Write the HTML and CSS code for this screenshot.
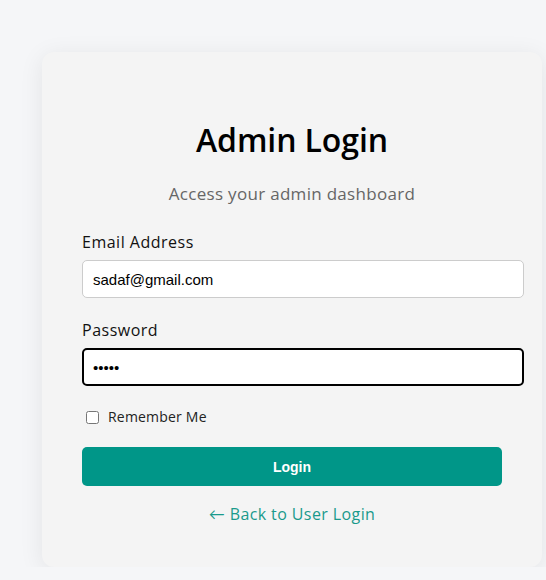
FILE: index.html
```html
<!DOCTYPE html>
<html lang="en">
<head>
<meta charset="utf-8">
<title>Admin Login</title>
<link rel="stylesheet" href="styles.css">
</head>
<body>
<div class="card">
  <h2 class="title">Admin Login</h2>
  <p class="subtitle">Access your admin dashboard</p>
  <form class="form">
    <label class="label" for="email">Email Address</label>
    <input class="input" id="email" type="email" value="sadaf@gmail.com">
    <label class="label label-pw" for="pw">Password</label>
    <input class="input input-focus" id="pw" type="password" value="admin">
    <label class="remember"><input class="check" type="checkbox"><span>Remember Me</span></label>
    <button class="btn" type="button">Login</button>
  </form>
  <a class="back" href="#">← Back to User Login</a>
</div>
</body>
</html>
```
FILE: styles.css
```css
html, body {
  margin: 0;
  padding: 0;
}
body {
  background: #f5f6f8;
  font-family: "Open Sans", "Lato", sans-serif;
  color: #111;
}
.card {
  box-sizing: border-box;
  width: 500px;
  margin: 52px 0 0 42px;
  padding: 0 40px 41px;
  background: #f4f4f4;
  border-radius: 12px;
  box-shadow: 0 4px 24px rgba(0, 0, 0, 0.08);
  display: flex;
  flex-direction: column;
  overflow: hidden;
}
.title {
  margin: 68px 0 0;
  font-size: 32px;
  line-height: 40px;
  font-weight: 600;
  text-align: center;
  color: #000;
  letter-spacing: -0.1px;
}
.subtitle {
  margin: 22px 0 0;
  font-size: 17px;
  line-height: 24px;
  color: #666;
  text-align: center;
  letter-spacing: 0.3px;
}
.form {
  display: flex;
  flex-direction: column;
  margin: 0;
}
.label {
  display: block;
  margin-top: 24px;
  font-size: 16px;
  line-height: 24px;
  color: #111;
  letter-spacing: 0.5px;
}
.label-pw {
  margin-top: 20px;
}
.input {
  width: 100%;
  margin-top: 6px;
  padding: 0 10px;
  border: 1px solid #ccc;
  border-radius: 5px;
  background: #fff;
  font-family: "Liberation Sans", Arial, sans-serif;
  font-size: 15px;
  color: #000;
  outline: none;
  box-sizing: content-box;
  height: 36px;
}
.input-focus {
  border: 2px solid #000;
  padding: 0 9px;
  height: 34px;
}
.remember {
  display: flex;
  align-items: center;
  margin-top: 21px;
  font-size: 14px;
  line-height: 20px;
  color: #222;
  letter-spacing: 0.2px;
}
.check {
  width: 13px;
  height: 13px;
  margin: 0 9px 0 4px;
}
.btn {
  margin-top: 20px;
  height: 39px;
  border: none;
  border-radius: 5px;
  background: #009688;
  color: #fff;
  font-family: "Liberation Sans", Arial, sans-serif;
  font-weight: bold;
  font-size: 14px;
}
.back {
  margin-top: 16px;
  font-size: 16px;
  line-height: 24px;
  color: #1a9a8c;
  text-align: center;
  text-decoration: none;
  letter-spacing: 0.4px;
}
```
